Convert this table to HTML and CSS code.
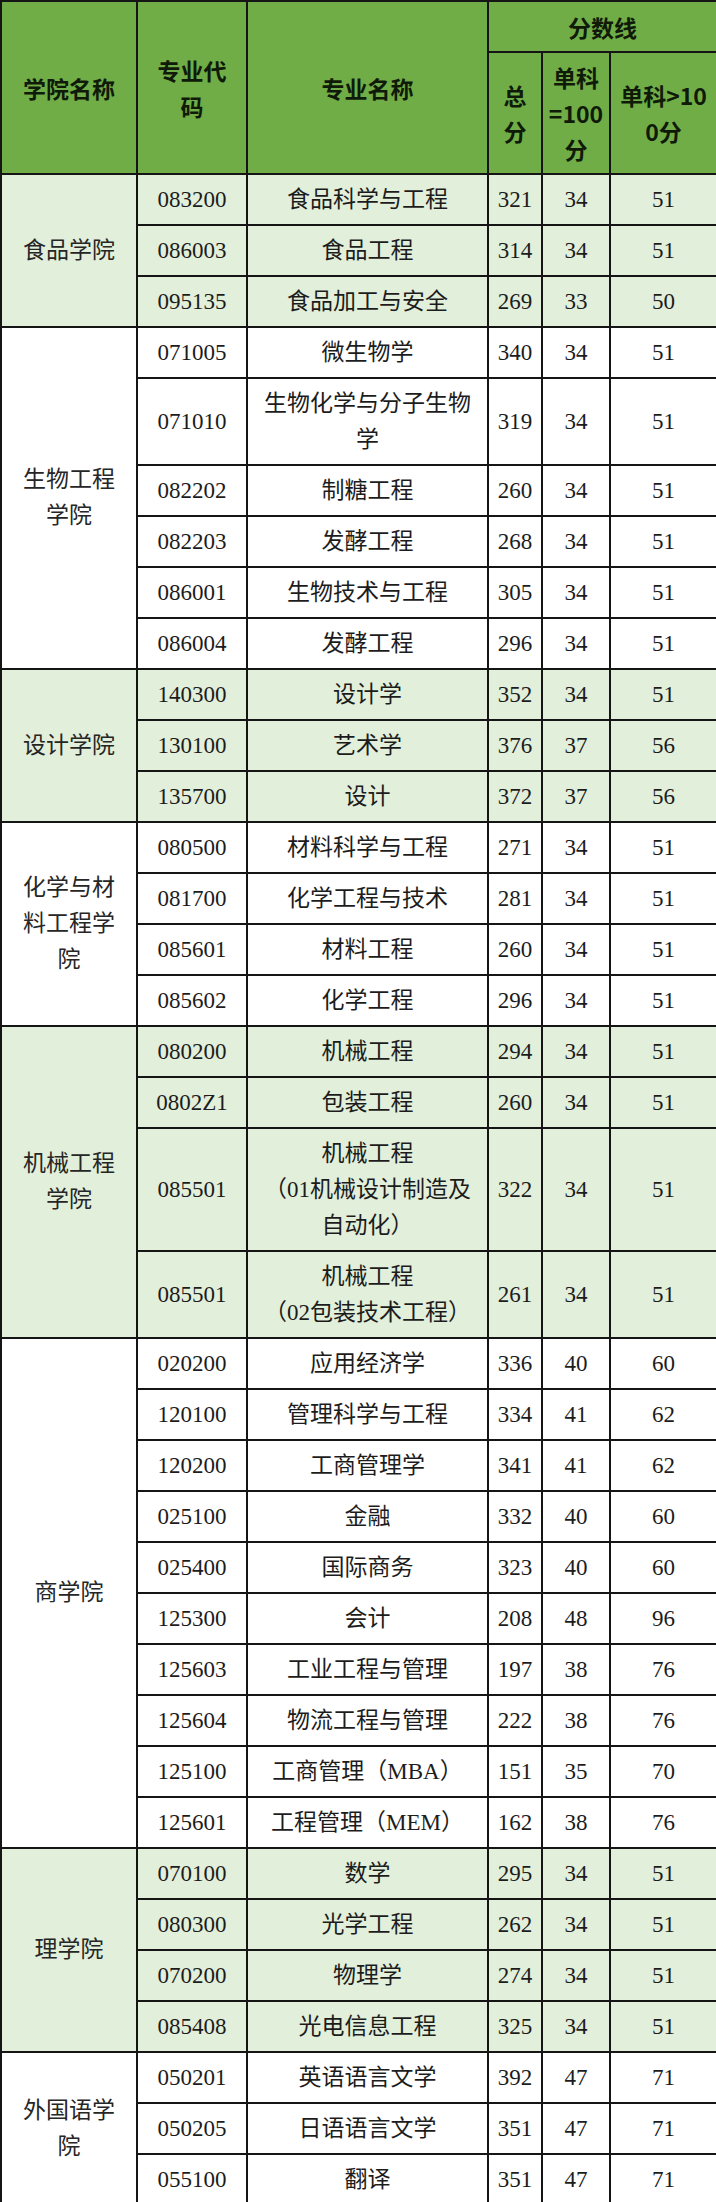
FILE: index.html
```html
<!DOCTYPE html>
<html lang="zh-CN">
<head>
<meta charset="utf-8">
<title>分数线</title>
<link rel="stylesheet" href="styles.css">
</head>
<body>
<table class="score-table">
  <colgroup>
    <col class="c-college">
    <col class="c-code">
    <col class="c-name">
    <col class="c-total">
    <col class="c-single">
    <col class="c-over">
  </colgroup>
  <thead>
    <tr class="head-top">
      <th rowspan="2">学院名称</th>
      <th rowspan="2">专业代<br>码</th>
      <th rowspan="2">专业名称</th>
      <th colspan="3">分数线</th>
    </tr>
    <tr class="head-sub">
      <th>总<br>分</th>
      <th>单科<br>=100<br>分</th>
      <th>单科&gt;10<br>0分</th>
    </tr>
  </thead>
  <tbody class="g-green">
    <tr><td rowspan="3" class="college">食品学院</td><td>083200</td><td class="name">食品科学与工程</td><td>321</td><td>34</td><td>51</td></tr>
    <tr><td>086003</td><td class="name">食品工程</td><td>314</td><td>34</td><td>51</td></tr>
    <tr><td>095135</td><td class="name">食品加工与安全</td><td>269</td><td>33</td><td>50</td></tr>
  </tbody>
  <tbody class="g-white">
    <tr><td rowspan="6" class="college">生物工程学院</td><td>071005</td><td class="name">微生物学</td><td>340</td><td>34</td><td>51</td></tr>
    <tr><td>071010</td><td class="name">生物化学与分子生物学</td><td>319</td><td>34</td><td>51</td></tr>
    <tr><td>082202</td><td class="name">制糖工程</td><td>260</td><td>34</td><td>51</td></tr>
    <tr><td>082203</td><td class="name">发酵工程</td><td>268</td><td>34</td><td>51</td></tr>
    <tr><td>086001</td><td class="name">生物技术与工程</td><td>305</td><td>34</td><td>51</td></tr>
    <tr><td>086004</td><td class="name">发酵工程</td><td>296</td><td>34</td><td>51</td></tr>
  </tbody>
  <tbody class="g-green">
    <tr><td rowspan="3" class="college">设计学院</td><td>140300</td><td class="name">设计学</td><td>352</td><td>34</td><td>51</td></tr>
    <tr><td>130100</td><td class="name">艺术学</td><td>376</td><td>37</td><td>56</td></tr>
    <tr><td>135700</td><td class="name">设计</td><td>372</td><td>37</td><td>56</td></tr>
  </tbody>
  <tbody class="g-white">
    <tr><td rowspan="4" class="college">化学与材料工程学院</td><td>080500</td><td class="name">材料科学与工程</td><td>271</td><td>34</td><td>51</td></tr>
    <tr><td>081700</td><td class="name">化学工程与技术</td><td>281</td><td>34</td><td>51</td></tr>
    <tr><td>085601</td><td class="name">材料工程</td><td>260</td><td>34</td><td>51</td></tr>
    <tr><td>085602</td><td class="name">化学工程</td><td>296</td><td>34</td><td>51</td></tr>
  </tbody>
  <tbody class="g-green">
    <tr><td rowspan="4" class="college">机械工程学院</td><td>080200</td><td class="name">机械工程</td><td>294</td><td>34</td><td>51</td></tr>
    <tr><td>0802Z1</td><td class="name">包装工程</td><td>260</td><td>34</td><td>51</td></tr>
    <tr><td>085501</td><td class="name">机械工程<br>（01机械设计制造及自动化）</td><td>322</td><td>34</td><td>51</td></tr>
    <tr><td>085501</td><td class="name">机械工程<br>（02包装技术工程）</td><td>261</td><td>34</td><td>51</td></tr>
  </tbody>
  <tbody class="g-white">
    <tr><td rowspan="10" class="college">商学院</td><td>020200</td><td class="name">应用经济学</td><td>336</td><td>40</td><td>60</td></tr>
    <tr><td>120100</td><td class="name">管理科学与工程</td><td>334</td><td>41</td><td>62</td></tr>
    <tr><td>120200</td><td class="name">工商管理学</td><td>341</td><td>41</td><td>62</td></tr>
    <tr><td>025100</td><td class="name">金融</td><td>332</td><td>40</td><td>60</td></tr>
    <tr><td>025400</td><td class="name">国际商务</td><td>323</td><td>40</td><td>60</td></tr>
    <tr><td>125300</td><td class="name">会计</td><td>208</td><td>48</td><td>96</td></tr>
    <tr><td>125603</td><td class="name">工业工程与管理</td><td>197</td><td>38</td><td>76</td></tr>
    <tr><td>125604</td><td class="name">物流工程与管理</td><td>222</td><td>38</td><td>76</td></tr>
    <tr><td>125100</td><td class="name">工商管理（MBA）</td><td>151</td><td>35</td><td>70</td></tr>
    <tr><td>125601</td><td class="name">工程管理（MEM）</td><td>162</td><td>38</td><td>76</td></tr>
  </tbody>
  <tbody class="g-green">
    <tr><td rowspan="4" class="college">理学院</td><td>070100</td><td class="name">数学</td><td>295</td><td>34</td><td>51</td></tr>
    <tr><td>080300</td><td class="name">光学工程</td><td>262</td><td>34</td><td>51</td></tr>
    <tr><td>070200</td><td class="name">物理学</td><td>274</td><td>34</td><td>51</td></tr>
    <tr><td>085408</td><td class="name">光电信息工程</td><td>325</td><td>34</td><td>51</td></tr>
  </tbody>
  <tbody class="g-white">
    <tr><td rowspan="3" class="college">外国语学院</td><td>050201</td><td class="name">英语语言文学</td><td>392</td><td>47</td><td>71</td></tr>
    <tr><td>050205</td><td class="name">日语语言文学</td><td>351</td><td>47</td><td>71</td></tr>
    <tr><td>055100</td><td class="name">翻译</td><td>351</td><td>47</td><td>71</td></tr>
  </tbody>
</table>
</body>
</html>
```

FILE: styles.css
```css
html, body {
  margin: 0;
  padding: 0;
  background: #ffffff;
}

.score-table {
  width: 716px;
  table-layout: fixed;
  border-collapse: collapse;
  font-family: "Liberation Serif", "Noto Sans CJK SC", serif;
  font-size: 23px;
  color: #1c1c1c;
}

.c-college { width: 136px; }
.c-code { width: 110px; }
.c-name { width: 241px; }
.c-total { width: 54px; }
.c-single { width: 68px; }
.c-over { width: 107px; }

.score-table th,
.score-table td {
  border: 2px solid #151515;
  text-align: center;
  vertical-align: middle;
  line-height: 36px;
}

.score-table th {
  background: #70ad47;
  color: #0f1a08;
  font-family: "Noto Sans CJK SC", sans-serif;
  font-weight: bold;
  font-size: 23px;
  padding: 6px 0;
}

.head-top th[colspan] {
  height: 37px;
}

.head-sub th {
  height: 108px;
  padding: 6px 0;
}

.score-table td {
  padding: 6.5px 0;
}

.score-table td.name {
  padding-left: 10px;
  padding-right: 10px;
}

.score-table td.college {
  padding-left: 18px;
  padding-right: 18px;
  color: #262626;
}

.g-green td {
  background: #e2efda;
}

.g-white td {
  background: #ffffff;
}
```
